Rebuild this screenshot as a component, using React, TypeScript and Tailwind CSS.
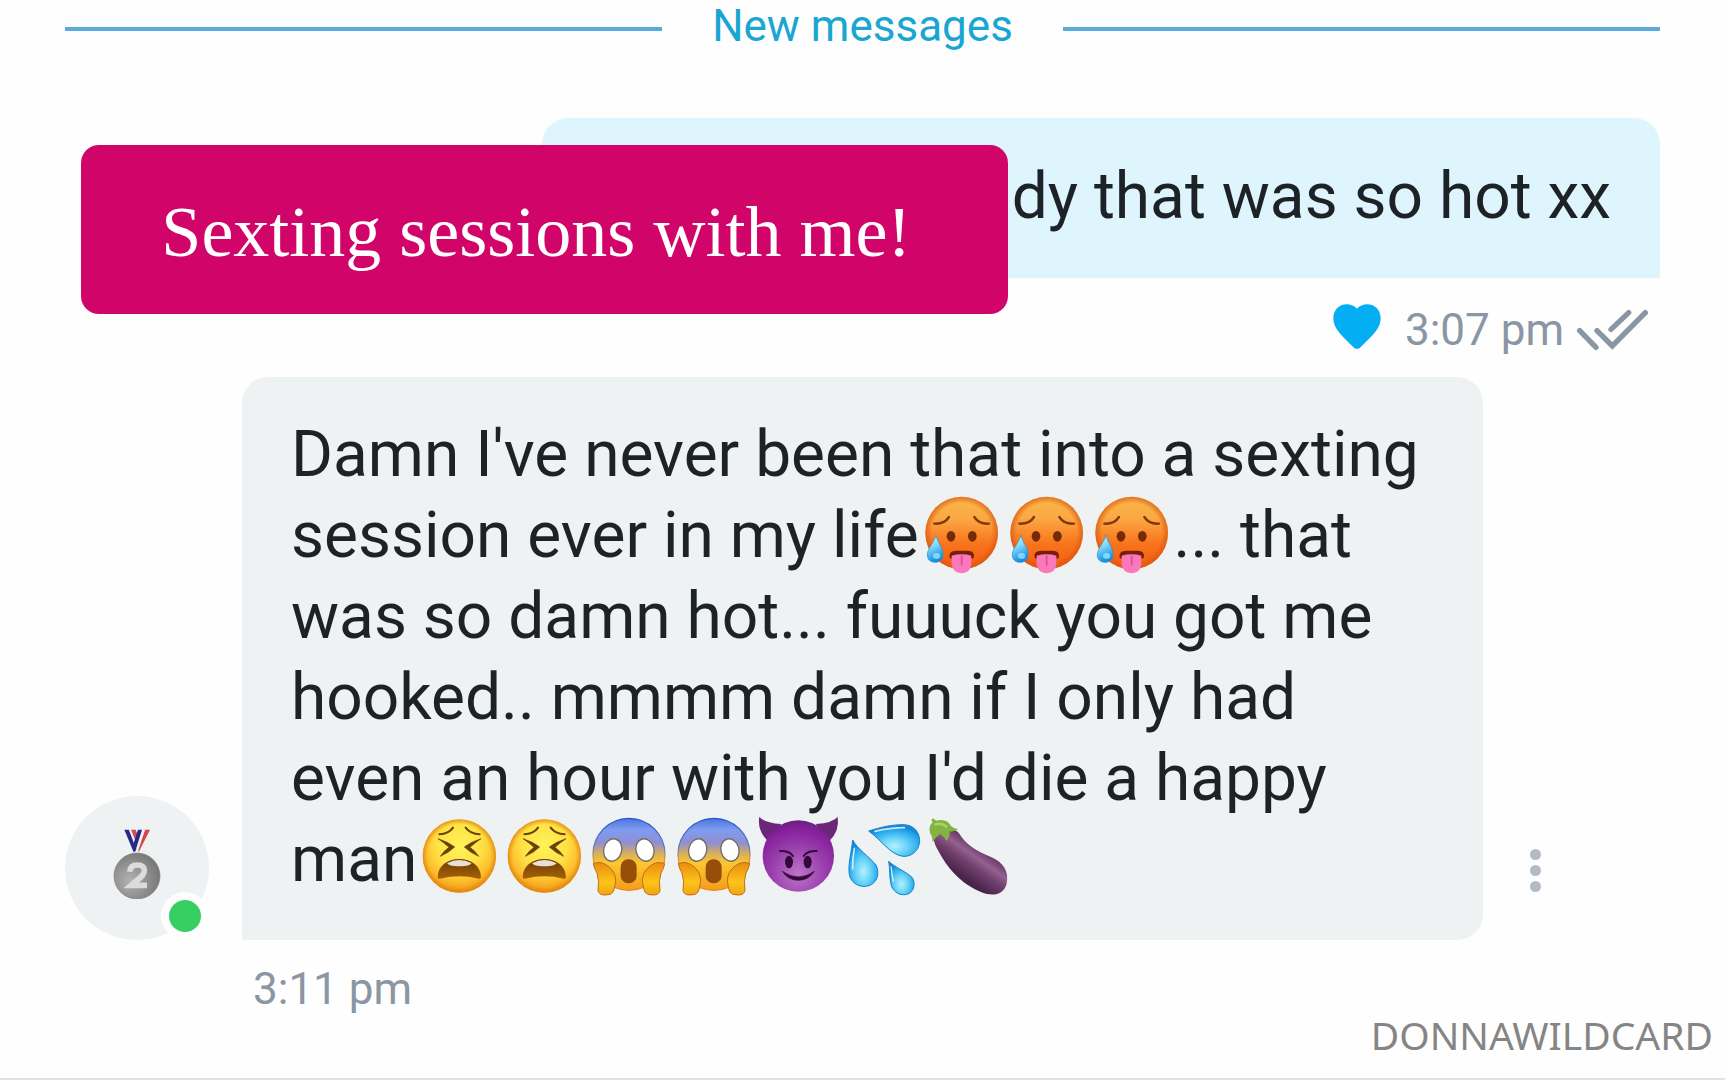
import React from "react";

const emojiBox = "inline-block h-[81px] w-[85px] overflow-visible align-top";

function Gradients() {
  return (
    <svg className="absolute h-0 w-0" aria-hidden="true">
      <defs>
        <linearGradient id="hot" x1="0" y1="0" x2="0" y2="1">
          <stop offset="0" stopColor="#f9b748" />
          <stop offset="0.3" stopColor="#fba844" />
          <stop offset="0.65" stopColor="#f8741c" />
          <stop offset="1" stopColor="#f25a12" />
        </linearGradient>
        <radialGradient id="hotRim" cx="0.5" cy="0.5" r="0.5">
          <stop offset="0.82" stopColor="#d8500c" stopOpacity="0" />
          <stop offset="1" stopColor="#d4560f" stopOpacity="0.7" />
        </radialGradient>
        <radialGradient id="yellow" cx="0.5" cy="0.36" r="0.62">
          <stop offset="0" stopColor="#fff35a" />
          <stop offset="0.5" stopColor="#fee144" />
          <stop offset="0.8" stopColor="#fdbb2b" />
          <stop offset="1" stopColor="#ee9414" />
        </radialGradient>
        <radialGradient id="rim" cx="0.5" cy="0.5" r="0.5">
          <stop offset="0.86" stopColor="#e08a10" stopOpacity="0" />
          <stop offset="1" stopColor="#dd8410" stopOpacity="0.75" />
        </radialGradient>
        <linearGradient id="brownMouth" x1="0" y1="0" x2="0" y2="1">
          <stop offset="0" stopColor="#6d3b06" />
          <stop offset="1" stopColor="#a56206" />
        </linearGradient>
        <linearGradient id="scream" x1="0" y1="0" x2="0" y2="1">
          <stop offset="0" stopColor="#4a76e0" />
          <stop offset="0.16" stopColor="#7f9bf0" />
          <stop offset="0.34" stopColor="#8f8fd2" />
          <stop offset="0.48" stopColor="#d3ac62" />
          <stop offset="0.62" stopColor="#fcc72f" />
          <stop offset="1" stopColor="#f49c1c" />
        </linearGradient>
        <linearGradient id="screamRim" x1="0" y1="0" x2="0" y2="1">
          <stop offset="0" stopColor="#2455cc" />
          <stop offset="0.4" stopColor="#6377bd" />
          <stop offset="0.55" stopColor="#e0952d" />
          <stop offset="1" stopColor="#e78c15" />
        </linearGradient>
        <linearGradient id="hand" x1="0" y1="0" x2="0" y2="1">
          <stop offset="0" stopColor="#e88b12" />
          <stop offset="0.6" stopColor="#fcc419" />
          <stop offset="1" stopColor="#efa512" />
        </linearGradient>
        <radialGradient id="purple" cx="0.5" cy="0.75" r="0.75">
          <stop offset="0" stopColor="#bb75c6" />
          <stop offset="0.5" stopColor="#9a3fae" />
          <stop offset="0.85" stopColor="#85209b" />
          <stop offset="1" stopColor="#6b217f" />
        </radialGradient>
        <radialGradient id="drop" cx="0.5" cy="0.68" r="0.62">
          <stop offset="0" stopColor="#b5f1fd" />
          <stop offset="0.4" stopColor="#6dd5f8" />
          <stop offset="0.8" stopColor="#29a9ee" />
          <stop offset="1" stopColor="#1788d4" />
        </radialGradient>
        <linearGradient id="tear" x1="0" y1="0" x2="0.3" y2="1">
          <stop offset="0" stopColor="#e9fbff" />
          <stop offset="0.5" stopColor="#7fd4fa" />
          <stop offset="1" stopColor="#118fe0" />
        </linearGradient>
        <linearGradient id="eggplant" gradientUnits="userSpaceOnUse" x1="785" y1="140" x2="722" y2="230">
          <stop offset="0" stopColor="#5a2f5b" />
          <stop offset="0.35" stopColor="#94608f" />
          <stop offset="0.6" stopColor="#70406d" />
          <stop offset="1" stopColor="#4a2349" />
        </linearGradient>
        <radialGradient id="silver" cx="0.35" cy="0.6" r="0.7">
          <stop offset="0" stopColor="#b3b3b3" />
          <stop offset="0.5" stopColor="#929292" />
          <stop offset="1" stopColor="#757575" />
        </radialGradient>
      </defs>
    </svg>
  );
}

function HotFace() {
  return (
    <svg className={emojiBox} viewBox="66 48 255 243" role="img" aria-label="hot face">
      <circle cx="194" cy="162" r="109" fill="url(#hot)" />
      <circle cx="194" cy="162" r="109" fill="url(#hotRim)" />
      <g fill="none" stroke="#82380a" strokeWidth="7" strokeLinecap="round">
        <path d="M112 134Q142 136 156 114" />
        <path d="M276 134Q246 136 232 114" />
      </g>
      <ellipse cx="162" cy="172" rx="13" ry="16" fill="#742c08" />
      <ellipse cx="226" cy="172" rx="13" ry="16" fill="#742c08" />
      <path d="M158 236Q154 215 178 215H211Q235 215 230 236Q226 241 219 237H169Q162 241 158 236Z" fill="#7a1d0a" />
      <path d="M164 230Q194 222 223 230V256Q220 282 194 283Q167 282 164 256Z" fill="#fb78ba" />
      <path d="M194 232V258" stroke="#df4d99" strokeWidth="5" strokeLinecap="round" />
      <path d="M117 168C121 190 139 206 138 227C138 242 127 250 114 250C100 250 90 241 91 226C93 205 111 192 117 168Z" fill="url(#tear)" stroke="#2290ce" strokeWidth="2" />
      <ellipse cx="119" cy="231" rx="11" ry="9" fill="#a6eafd" opacity="0.7" />
    </svg>
  );
}

function WearyFace() {
  return (
    <svg className={emojiBox} viewBox="51 60 255 243" role="img" aria-label="tired face">
      <circle cx="178" cy="171" r="110" fill="url(#yellow)" />
      <circle cx="178" cy="171" r="110" fill="url(#rim)" />
      <g fill="none" stroke="#694008" strokeWidth="6" strokeLinecap="round">
        <path d="M118 106Q146 105 159 86" />
        <path d="M239 106Q211 105 197 86" />
      </g>
      <path d="M114 119Q143 128 164 144Q145 162 121 172Q132 155 147 145Q132 131 114 119Z" fill="#694008" stroke="#694008" strokeWidth="2" strokeLinejoin="round" />
      <path d="M243 119Q214 128 193 144Q212 162 236 172Q225 155 210 145Q225 131 243 119Z" fill="#694008" stroke="#694008" strokeWidth="2" strokeLinejoin="round" />
      <path d="M113 233C115 200 142 180 178 180C214 180 241 200 243 233Q243 241 236 239Q178 225 120 239Q113 241 113 233Z" fill="url(#brownMouth)" />
      <path d="M141 193Q178 173 215 193Q207 203 178 202Q149 203 141 193Z" fill="#e8e0d3" />
    </svg>
  );
}

function ScreamFace() {
  return (
    <svg className={emojiBox} viewBox="561 60 255 243" role="img" aria-label="face screaming in fear">
      <circle cx="687" cy="166" r="108" fill="url(#scream)" stroke="url(#screamRim)" strokeWidth="4" />
      <ellipse cx="638" cy="153" rx="27" ry="34" transform="rotate(14 638 153)" fill="#fff" stroke="#716b68" strokeWidth="4" />
      <ellipse cx="735" cy="153" rx="27" ry="34" transform="rotate(-14 735 153)" fill="#fff" stroke="#716b68" strokeWidth="4" />
      <rect x="662" y="181" width="48" height="72" rx="23" fill="#964e08" />
      <path d="M580 194Q603 184 624 201Q646 218 647 244Q645 265 640 278Q633 289 615 288Q596 288 594 274Q599 247 591 222Q582 207 580 194Z" fill="url(#hand)" stroke="#c56b13" strokeWidth="3" />
      <path d="M794 194Q771 184 750 201Q728 218 727 244Q729 265 734 278Q741 289 759 288Q778 288 780 274Q775 247 783 222Q792 207 794 194Z" fill="url(#hand)" stroke="#c56b13" strokeWidth="3" />
    </svg>
  );
}

function DevilFace() {
  return (
    <svg className={emojiBox} viewBox="111 60 255 243" role="img" aria-label="smiling face with horns">
      <path d="M118 53Q131 71 184 75L143 126Q111 94 118 53Z" fill="#6b2777" />
      <path d="M353 53Q340 71 287 75L328 126Q360 94 353 53Z" fill="#6b2777" />
      <circle cx="235" cy="171" r="107" fill="url(#purple)" />
      <g fill="none" stroke="#35083d" strokeLinecap="round">
        <path d="M180 156Q208 155 219 171" strokeWidth="6" />
        <path d="M290 156Q262 155 251 171" strokeWidth="6" />
      </g>
      <ellipse cx="207" cy="189" rx="12" ry="19" fill="#35083d" />
      <ellipse cx="263" cy="189" rx="12" ry="19" fill="#35083d" />
      <path d="M187 217Q235 251 283 217Q266 244 235 244Q204 244 187 217Z" fill="#35083d" stroke="#35083d" strokeWidth="2" strokeLinejoin="round" />
    </svg>
  );
}

function Droplets() {
  return (
    <svg className={emojiBox} viewBox="366 60 255 243" role="img" aria-label="sweat droplets">
      <g fill="url(#drop)" stroke="#1682cd" strokeWidth="3" strokeLinejoin="round">
        <path d="M446 96C480 85 518 76 553 77C583 79 599 100 599 127C597 156 574 174 549 172C511 167 486 125 446 96Z" />
        <path d="M398 123C412 150 447 172 468 198C480 223 472 251 447 260C420 268 393 253 388 227C383 195 395 159 398 123Z" />
        <path d="M506 187C523 204 555 216 576 235C588 253 582 278 564 285C542 293 520 279 514 260C507 236 511 211 506 187Z" />
      </g>
      <g fill="none" stroke="#effcff" strokeLinecap="round" opacity="0.8">
        <path d="M465 97Q511 86 553 86" strokeWidth="5" />
        <path d="M403 148Q397 180 398 210" strokeWidth="5" />
        <path d="M513 203Q516 228 520 247" strokeWidth="4" />
      </g>
    </svg>
  );
}

function Eggplant() {
  return (
    <svg className={emojiBox} viewBox="621 60 255 243" role="img" aria-label="eggplant">
      <path d="M638 105C655 84 703 82 717 103C737 137 771 158 813 174C851 190 868 219 860 254C852 282 830 290 801 285C744 271 692 220 666 175C654 153 641 137 638 105Z" fill="url(#eggplant)" />
      <path d="M634 63Q638 54 645 62L648 65Q682 57 693 81Q701 89 715 91Q704 99 689 97Q690 113 680 126Q672 112 660 105Q649 113 637 129Q638 113 630 103Q625 80 638 70Z" fill="#83b441" />
      <path d="M646 76Q665 70 679 83" stroke="#a9d469" strokeWidth="7" strokeLinecap="round" fill="none" />
    </svg>
  );
}

function SilverMedal() {
  return (
    <svg className="mb-2 h-[70px] w-[48px]" viewBox="188 145 144 210" role="img" aria-label="2nd place medal">
      <path d="M222 147H236L260 204L250 215Z" fill="#262a84" />
      <path d="M236 147H242L261 196L258 208Z" fill="#f3eef6" />
      <path d="M242 147H256L264 169L258 186Z" fill="#d8495a" />
      <path d="M299 147H284L262 203L265 215Z" fill="#cf494c" />
      <path d="M284 147H275L258 203L262 215Z" fill="#f5eff5" />
      <path d="M275 147H263L246 200L254 215Z" fill="#262a84" />
      <circle cx="260" cy="286" r="69" fill="url(#silver)" stroke="#777" strokeWidth="2" />
      <path d="M238 273Q240 253 261 253Q282 253 282 270C282 284 268 292 242 314H290" fill="none" stroke="#dcdcdc" strokeWidth="17" />
    </svg>
  );
}

function Heart() {
  return (
    <svg className="mb-2 h-[46px] w-[48px]" viewBox="90 69 144 138" role="img" aria-label="Liked">
      <path d="M162 86C143 63 91 68 91 116C91 148 122 171 153 203Q162 210 171 203C202 171 233 148 233 116C233 68 181 63 162 86Z" fill="#03aef2" />
    </svg>
  );
}

function DoubleCheck() {
  return (
    <svg className="h-[42px] w-[74px]" viewBox="827 90 222 126" role="img" aria-label="Read">
      <g fill="none" stroke="#8a96a3" strokeWidth="16" strokeLinecap="round">
        <path d="M838 155L887 205" />
        <path d="M890 155L936 201L1035 101" />
        <path d="M932 151L985 101" />
      </g>
    </svg>
  );
}

export default function App() {
  return (
    <main className="relative flex min-h-screen flex-col border-b-2 border-[#e2e2e2] bg-[#fefefe] px-[65px] font-['Roboto',sans-serif] text-[#1d2226]">
      <Gradients />
      <div className="flex h-[56px] items-center gap-[50px]">
        <span className="mt-[2px] h-1 flex-1 bg-[#5aaadb]" />
        <h2 className="pb-1 text-[44px] leading-[56px] text-[#19a6d1]">New messages</h2>
        <span className="mt-[2px] h-1 flex-1 bg-[#5aaadb]" />
      </div>

      <section className="relative mt-[62px] flex flex-col items-end">
        <p className="w-[70.1%] rounded-t-[26px] rounded-bl-[26px] bg-[#def5fd] px-[49px] pt-[38px] pb-[41px] text-right text-[64px] leading-[81px]">
          dy that was so hot xx
        </p>
        <div className="flex h-[99px] items-center pr-[10px] pt-1 text-[44px] text-[#8a96a3]">
          <Heart />
          <time className="mr-3 ml-6">3:07 pm</time>
          <DoubleCheck />
        </div>
        <h1 className="absolute top-[27px] left-4 flex h-[169px] w-[58.1%] items-center justify-center rounded-[18px] bg-[#d10569] pt-1 pr-4 font-['Liberation_Serif',serif] text-[72px] text-white">
          Sexting sessions with me!
        </h1>
      </section>

      <section className="flex items-end">
        <div className="relative mr-[33px] flex size-36 shrink-0 items-center justify-center rounded-full bg-[#eef2f3]">
          <SilverMedal />
          <span className="absolute right-0 bottom-0 size-12 rounded-full border-8 border-[#fefefe] bg-[#38cf62]" />
        </div>
        <p className="w-[1241px] rounded-t-[26px] rounded-br-[26px] bg-[#eef2f3] px-[49px] pt-[37px] pb-[40px] text-[64px] leading-[81px]">
          Damn I've never been that into a sexting session ever in my life
          <HotFace />
          <HotFace />
          <HotFace />
          ... that was so damn hot... fuuuck you got me hooked.. mmmm damn if I only had even an hour with you I'd die a happy{" "}
          <span className="whitespace-nowrap">
            man
            <WearyFace />
            <WearyFace />
            <ScreamFace />
            <ScreamFace />
            <DevilFace />
            <Droplets />
            <Eggplant />
          </span>
        </p>
        <button type="button" aria-label="Message options" className="mb-12 ml-[47px] flex flex-col gap-[5px]">
          <span className="size-[11px] rounded-full bg-[#b3bac1]" />
          <span className="size-[11px] rounded-full bg-[#b3bac1]" />
          <span className="size-[11px] rounded-full bg-[#b3bac1]" />
        </button>
      </section>
      <time className="mt-[21px] ml-[188px] text-[44px] leading-[56px] text-[#8a96a3]">3:11 pm</time>
      <footer className="-mt-[2px] -mr-[53px] self-end font-['Noto_Sans',sans-serif] text-[39px] leading-[40px] text-[#858585]">DONNAWILDCARD</footer>
    </main>
  );
}
